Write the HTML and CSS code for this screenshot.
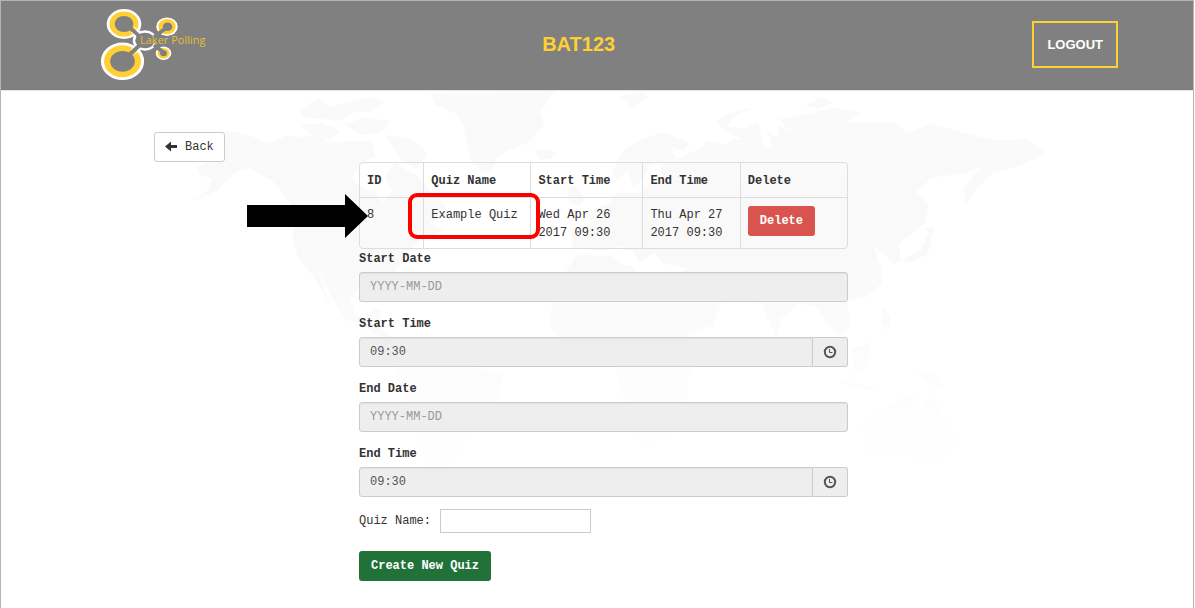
FILE: index.html
```html
<!DOCTYPE html>
<html lang="en">
<head>
<meta charset="utf-8">
<meta name="viewport" content="width=device-width, initial-scale=1">
<title>BAT123 - Laker Polling</title>
<link rel="stylesheet" href="styles.css">
</head>
<body>
<header class="topbar">
  <a class="logo" href="#" aria-label="Laker Polling home">
    <svg width="110" height="76" viewBox="100 5 110 76">
      <ellipse cx="145" cy="39.500" rx="11" ry="9" fill="none" stroke="#fff" stroke-width="2.500" />
      <path d="M151 39 L164 28 L164 50Z" fill="#808080" />
      <g fill="#fff">
        <ellipse cx="124" cy="23" rx="17.300" ry="15" />
        <ellipse cx="122.500" cy="60.300" rx="21.600" ry="18.800" />
        <ellipse cx="167" cy="25.700" rx="10.700" ry="9.300" />
        <ellipse cx="163.500" cy="52.300" rx="7.700" ry="6.800" />
      </g>
      <g fill="#ffd034">
        <ellipse cx="124" cy="23" rx="14.500" ry="12.600" />
        <ellipse cx="122.500" cy="60.300" rx="18.500" ry="16" />
        <ellipse cx="167" cy="25.700" rx="8.700" ry="7.600" />
        <ellipse cx="163.500" cy="52.300" rx="6" ry="5.300" />
      </g>
      <g fill="#808080">
        <ellipse cx="124" cy="23" rx="9.300" ry="8" />
        <ellipse cx="122.500" cy="60.300" rx="12.300" ry="10.400" />
        <ellipse cx="167.500" cy="25.700" rx="4.800" ry="4.300" />
        <ellipse cx="163.500" cy="52.300" rx="3.400" ry="3" />
      </g>
      <g stroke="#808080" stroke-width="4" fill="none">
        <path d="M129 26 L141 37" />
        <path d="M129 54 L141 43" />
        <path d="M166 27 L154 36" />
        <path d="M163 51 L154 44" />
      </g>
      <path d="M134 26 L140 31 M131 31 L136 35 M131 49 L136 44 M135 53 L140 48" stroke="#fff" stroke-width="1" fill="none" />
      <text class="logo-text" x="140" y="43">Laker Polling</text>
    </svg>
  </a>
  <h1 class="title">BAT123</h1>
  <button class="logout" type="button">LOGOUT</button>
</header>
<div class="page">
  <svg class="map" viewBox="0 90 1195 518" aria-hidden="true">
    <defs>
      <linearGradient id="fade" gradientUnits="userSpaceOnUse" x1="0" y1="90" x2="0" y2="470">
        <stop offset="0" stop-color="#fafafa" />
        <stop offset="0.4" stop-color="#f9f9f9" />
        <stop offset="1" stop-color="#fff" />
      </linearGradient>
    </defs>
    <g fill="url(#fade)">
      <path d="M220 130L235 131L253 136L270 143L285 135L300 136L318 134L330 142L355 140L372 140L375 155L358 165L352 178L362 187L375 190L383 202L392 190L385 175L395 160L407 170L418 175L430 190L445 205L450 213L430 222L443 230L420 240L410 250L395 270L398 298L388 284L360 286L350 300L355 315L368 318L372 308L382 310L378 325L390 335L404 345L390 342L365 328L345 318L330 295L318 270L324 290L330 305L320 288L310 272L297 255L292 235L298 215L288 200L272 180L250 168L238 170L228 178L216 190L192 200L207 190L212 178L200 174L197 166L210 160L190 150L205 148L208 140Z" />
      <path d="M300 108L318 98L330 106L352 100L370 96L384 101L370 110L352 112L340 120L322 118L302 116ZM300 124L322 122L340 130L330 138L310 134ZM345 124L365 116L390 120L380 132L360 134ZM385 134L412 138L428 154L416 168L402 160L394 148Z" />
      <path d="M430 92L556 90L548 100L540 112L545 123L535 135L528 142L508 150L498 157L490 172L480 170L470 157L466 140L464 125L455 112L445 108L435 104Z" />
      <path d="M534 150L545 148L558 152L552 158L540 159ZM620 96L640 90L650 96L632 106ZM567 188L575 184L586 198L580 205L570 202ZM806 104L823 96L834 102L820 108Z" />
      <path d="M618 180L612 172L625 148L645 137L665 131L690 142L684 150L670 146L678 158L700 148L708 140L725 144L736 138L744 140L732 132L722 126L718 120L727 113L755 106L735 116L728 125L745 128L758 122L762 132L764 146L774 148L768 130L778 136L780 124L792 132L780 118L800 115L833 107L822 104L863 112L847 122L897 122L908 132L933 123L977 135L1000 140L1027 138L1047 151L1037 158L1020 165L993 173L977 190L967 205L965 187L985 165L967 172L933 177L917 192L930 203L926 223L900 243L902 260L896 264L887 255L875 247L882 267L883 283L867 297L847 300L852 323L843 337L828 323L817 307L800 303L783 317L777 337L767 313L763 303L740 300L722 303L713 325L687 337L680 301L673 275L688 268L662 262L655 252L640 262L632 250L618 246L600 251L585 248L573 247L572 228L590 225L592 210L610 202L618 192L640 192L650 184L664 180L660 162L651 164L642 180L634 186L628 170Z" />
      <path d="M577 255L612 255L622 264L634 266L638 274L672 276L680 302L690 342L712 340L700 360L687 380L689 405L665 440L645 446L632 430L622 390L615 366L596 357L568 350L550 325L553 298L568 268Z" />
      <path d="M398 345L420 336L450 350L470 365L503 375L497 400L480 425L460 450L440 480L430 470L420 450L412 420L395 380Z" />
      <path d="M863 426L888 406L906 396L918 398L924 412L932 392L944 414L958 440L946 462L920 466L900 452L870 456Z" />
      <path d="M853 348L872 342L868 366L856 372ZM918 370L935 372L948 388L930 384ZM843 380L880 388L878 390L845 384ZM884 306L892 318L888 330L882 322ZM902 260L922 250L930 232L926 228L936 226L929 254L910 262Z" />
    </g>
  </svg>
  <main class="layout">
    <div class="side">
      <button class="btn btn-back" type="button">
        <svg width="12" height="12" viewBox="0 0 12 12" aria-hidden="true"><path d="M0 5.500L6 0.500V4H12V7H6V10.500Z" fill="#333" /></svg>
        <span>Back</span>
      </button>
    </div>
    <form class="content">
      <div class="table-wrap">
        <table class="quizzes">
          <thead>
            <tr><th class="c-id">ID</th><th class="c-name">Quiz Name</th><th class="c-start">Start Time</th><th class="c-end">End Time</th><th class="c-del">Delete</th></tr>
          </thead>
          <tbody>
            <tr>
              <td>8</td>
              <td>Example Quiz</td>
              <td>Wed Apr 26<br>2017 09:30</td>
              <td>Thu Apr 27<br>2017 09:30</td>
              <td><button class="btn btn-danger" type="button">Delete</button></td>
            </tr>
          </tbody>
        </table>
        <svg class="arrow" width="122" height="44" viewBox="0 0 122 44" aria-hidden="true"><path d="M0 11H98V0L121 22L98 44V33H0Z" /></svg>
        <div class="highlight"></div>
      </div>
      <div class="field">
        <label for="start-date">Start Date</label>
        <div class="group"><input class="control" id="start-date" type="text" placeholder="YYYY-MM-DD" readonly></div>
      </div>
      <div class="field">
        <label for="start-time">Start Time</label>
        <div class="group">
          <input class="control" id="start-time" type="text" value="09:30" readonly>
          <button class="addon" type="button" aria-label="Pick start time"><svg width="12" height="12" viewBox="0 0 12 12"><circle cx="6" cy="6" r="5.200" /><path d="M5.500 3V6.500H8.500" class="hand" /></svg></button>
        </div>
      </div>
      <div class="field">
        <label for="end-date">End Date</label>
        <div class="group"><input class="control" id="end-date" type="text" placeholder="YYYY-MM-DD" readonly></div>
      </div>
      <div class="field">
        <label for="end-time">End Time</label>
        <div class="group">
          <input class="control" id="end-time" type="text" value="09:30" readonly>
          <button class="addon" type="button" aria-label="Pick end time"><svg width="12" height="12" viewBox="0 0 12 12"><circle cx="6" cy="6" r="5.200" /><path d="M5.500 3V6.500H8.500" class="hand" /></svg></button>
        </div>
      </div>
      <div class="name-row">
        <label for="quiz-name">Quiz Name:</label>
        <input class="name-input" id="quiz-name" type="text">
      </div>
      <button class="btn btn-create" type="submit">Create New Quiz</button>
    </form>
  </main>
</div>
</body>
</html>
```
FILE: styles.css
```css
* { box-sizing: border-box; }

body {
  margin: 0 1px 0 0;
  min-height: 100vh;
  border: 1px solid #b4b4b4;
  border-bottom: 0;
  background: #fff;
  color: #333;
  font: 12px/18px "Liberation Mono", "Courier New", monospace;
  overflow-x: hidden;
}

button, input { font: inherit; color: inherit; }

.topbar {
  display: grid;
  grid-template-columns: 442fr 490fr auto;
  align-items: center;
  height: 90px;
  padding: 0 75px 3px 99px;
  background: #808080;
  border-bottom: 1px solid #e4e4e4;
}

.logo { justify-self: start; }
.logo svg { display: block; overflow: visible; }

.logo-text {
  font: 11px "Open Sans", sans-serif;
  fill: #e6bd38;
}

.title {
  margin: 0;
  color: #ffd034;
  font: bold 20px/24px "Liberation Sans", Arial, sans-serif;
}

.logout {
  padding: 12px 13px;
  border: 2px solid #ffd034;
  background: transparent;
  color: #fff;
  font: bold 13px/19px "Liberation Sans", Arial, sans-serif;
}

.page { position: relative; }

.map {
  position: absolute;
  top: 0;
  left: 0;
  z-index: -1;
  width: 100%;
}

.layout {
  display: grid;
  grid-template-columns: 153fr 205fr 489fr 345fr;
  padding: 41px 0 24px;
}

.side { grid-column: 2; }
.content { grid-column: 3; padding-top: 30px; }

.btn {
  height: 30px;
  padding: 0 11px;
  border: 1px solid transparent;
  border-radius: 3px;
  font-weight: bold;
}

.btn-back {
  display: flex;
  align-items: center;
  gap: 8px;
  padding: 0 10px;
  background: #fff;
  border-color: #ccc;
  font-weight: normal;
}

.btn-danger { display: block; background: #d9534f; color: #fff; }
.btn-create { background: #217239; color: #fff; }

.table-wrap { position: relative; }

.quizzes {
  width: 100%;
  table-layout: fixed;
  border-collapse: separate;
  border-spacing: 0;
  border: 1px solid #ddd;
  border-radius: 4px;
}

.quizzes th, .quizzes td {
  text-align: left;
  vertical-align: top;
  border-left: 1px solid #ddd;
}

.quizzes th { padding: 9px 7px 7px; }
.quizzes td { padding: 8px 7px 6px; border-top: 1px solid #ddd; }
.quizzes th:first-child, .quizzes td:first-child { border-left: 0; }

.c-id { width: 13%; }
.c-name { width: 22%; }
.c-start { width: 23%; }
.c-end { width: 20%; }
.c-del { width: 22%; }

.arrow { position: absolute; top: 32px; left: -112px; }

.highlight {
  position: absolute;
  top: 31px;
  left: 10%;
  width: 27%;
  height: 46px;
  border: 4px solid #f00;
  border-radius: 9px;
}

.field { margin-bottom: 12px; }
.field label { display: block; margin-bottom: 3px; font-weight: bold; line-height: 20px; }

.group { display: flex; }

.control {
  flex: 1;
  min-width: 0;
  height: 30px;
  padding: 0 10px;
  border: 1px solid #ccc;
  border-radius: 3px;
  background: #eee;
  color: #555;
  box-shadow: inset 0 1px 1px #e0e0e0;
}

.control::placeholder { color: #999; opacity: 1; }
.control:not(:last-child) { border-radius: 3px 0 0 3px; }

.addon {
  display: grid;
  place-items: center;
  width: 35px;
  padding: 0;
  border: 1px solid #ccc;
  border-left: 0;
  border-radius: 0 3px 3px 0;
  background: #eee;
}

.addon svg { overflow: visible; fill: none; stroke: #555; stroke-width: 2; }
.addon .hand { stroke-width: 1; }

.name-row {
  display: flex;
  align-items: center;
  gap: 9px;
  margin-bottom: 18px;
}

.name-input {
  width: 151px;
  height: 24px;
  padding: 0 4px;
  border: 1px solid #ccc;
  background: #fff;
}
```
